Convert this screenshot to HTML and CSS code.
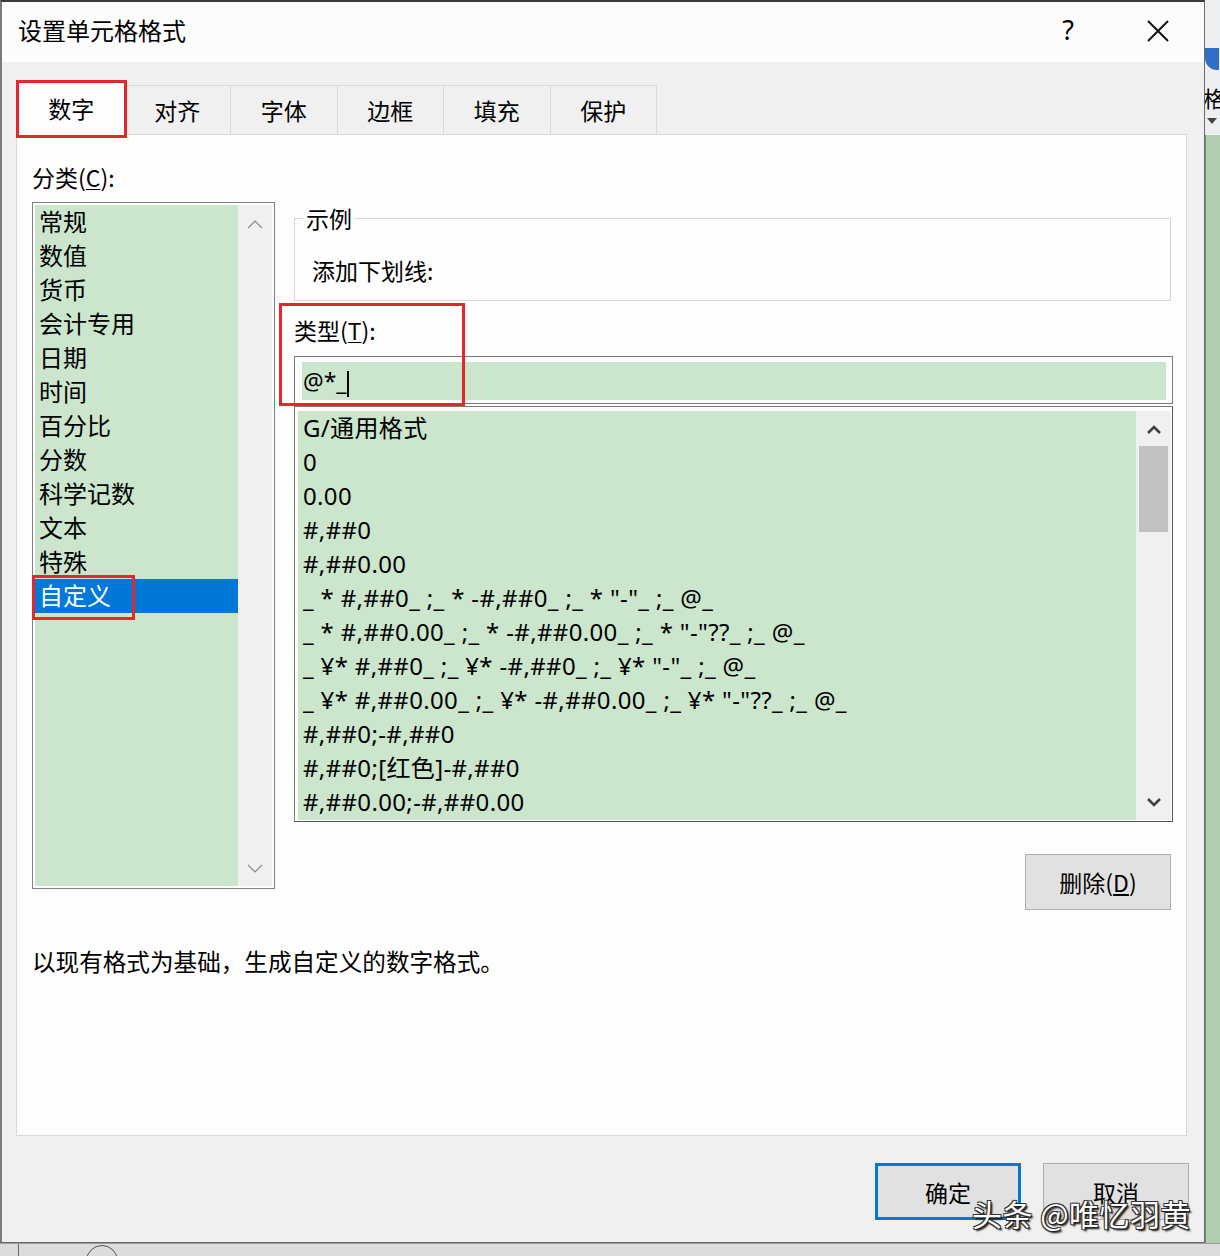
FILE: index.html
```html
<!DOCTYPE html>
<html lang="zh-CN">
<head>
    <meta charset="UTF-8">
    <meta name="viewport" content="width=device-width, initial-scale=1.0">
    <title>设置单元格格式</title>
    <link rel="stylesheet" href="styles.css">
</head>
<body>
<div class="desk">
    <div class="dialog">
        <div class="titlebar">
            <span class="title">设置单元格格式</span>
            <span class="help">?</span>
            <span class="close">
                <svg width="24" height="24" viewBox="0 0 24 24"><path d="M2 2 L22 22 M22 2 L2 22" stroke="#111" stroke-width="2" fill="none"/></svg>
            </span>
        </div>

        <div class="tabs">
            <div class="tab on">数字</div>
            <div class="tab">对齐</div>
            <div class="tab">字体</div>
            <div class="tab">边框</div>
            <div class="tab">填充</div>
            <div class="tab">保护</div>
        </div>

        <div class="panel">
            <div class="cols">
                <div class="leftcol">
                    <div class="label">分类(<u>C</u>):</div>
                    <div class="catbox">
                        <div class="catlist">
                            <div class="row">常规</div>
                            <div class="row">数值</div>
                            <div class="row">货币</div>
                            <div class="row">会计专用</div>
                            <div class="row">日期</div>
                            <div class="row">时间</div>
                            <div class="row">百分比</div>
                            <div class="row">分数</div>
                            <div class="row">科学记数</div>
                            <div class="row">文本</div>
                            <div class="row">特殊</div>
                            <div class="row sel">自定义<span class="mark mark-cat"></span></div>
                        </div>
                        <div class="sbar thin">
                            <svg width="16" height="10" viewBox="0 0 16 10"><polyline points="1,9 8,2 15,9" fill="none" stroke="#8a8a8a" stroke-width="1.2"/></svg>
                            <svg width="16" height="10" viewBox="0 0 16 10"><polyline points="1,1 8,8 15,1" fill="none" stroke="#8a8a8a" stroke-width="1.2"/></svg>
                        </div>
                    </div>
                </div>

                <div class="rightcol">
                    <div class="sample">
                        <span class="legend">示例</span>
                        <div class="sample-text">添加下划线:</div>
                    </div>
                    <div class="label type-label">类型(<u>T</u>):</div>
                    <div class="typebox">
                        <div class="typefill">@*_<span class="caret"></span></div>
                    </div>
                    <div class="fmtbox">
                        <div class="fmtlist">
                            <div class="row">G/通用格式</div>
                            <div class="row">0</div>
                            <div class="row">0.00</div>
                            <div class="row">#,##0</div>
                            <div class="row">#,##0.00</div>
                            <div class="row">_ * #,##0_ ;_ * -#,##0_ ;_ * "-"_ ;_ @_</div>
                            <div class="row">_ * #,##0.00_ ;_ * -#,##0.00_ ;_ * "-"??_ ;_ @_</div>
                            <div class="row">_ ¥* #,##0_ ;_ ¥* -#,##0_ ;_ ¥* "-"_ ;_ @_</div>
                            <div class="row">_ ¥* #,##0.00_ ;_ ¥* -#,##0.00_ ;_ ¥* "-"??_ ;_ @_</div>
                            <div class="row">#,##0;-#,##0</div>
                            <div class="row">#,##0;[红色]-#,##0</div>
                            <div class="row">#,##0.00;-#,##0.00</div>
                        </div>
                        <div class="sbar bold">
                            <svg width="16" height="10" viewBox="0 0 16 10"><polyline points="2,8 8,2 14,8" fill="none" stroke="#404040" stroke-width="2.6"/></svg>
                            <div class="thumb"></div>
                            <div class="spacer"></div>
                            <svg width="16" height="10" viewBox="0 0 16 10"><polyline points="2,2 8,8 14,2" fill="none" stroke="#404040" stroke-width="2.6"/></svg>
                        </div>
                    </div>
                    <div class="btnrow">
                        <button class="btn">删除(<u>D</u>)</button>
                    </div>
                    <span class="mark mark-type"></span>
                </div>
            </div>
            <p class="desc">以现有格式为基础，生成自定义的数字格式。</p>
        </div>

        <div class="footer">
            <button class="btn big default">确定</button>
            <button class="btn big">取消</button>
        </div>

        <div class="watermark">头条 @唯忆羽黄</div>
    </div>

    <div class="side">
        <div class="side-top">
            <div class="side-icon"></div>
            <span class="side-char">格</span>
            <span class="side-tri"></span>
        </div>
        <div class="side-green"></div>
    </div>

    <div class="bottom">
        <span class="bline"></span>
        <span class="bcircle"></span>
    </div>
</div>
</body>
</html>
```

FILE: styles.css
```css
* {
    box-sizing: border-box;
}
body {
    margin: 0;
    width: 1220px;
    height: 1256px;
    overflow: hidden;
    font-family: "Noto Sans", "Noto Sans CJK SC", sans-serif;
    color: #000;
    background: #d9d9d9;
}
.desk {
    display: grid;
    grid-template-columns: 1205px 15px;
    grid-template-rows: 1243px 13px;
}

/* dialog window */
.dialog {
    position: relative;
    display: flex;
    flex-direction: column;
    background: #f0f0f0;
    border-top: 2px solid #3a3a3a;
    border-left: 2px solid #7a7a7a;
    border-right: 1px solid #6a6a6a;
    border-bottom: 1px solid #6a6a6a;
}
.titlebar {
    height: 60px;
    background: #fcfcfc;
    display: flex;
    align-items: center;
    padding-left: 16px;
}
.title {
    font-size: 24px;
    line-height: 30px;
    font-family: "Noto Sans CJK SC", sans-serif;
    margin-top: -4px;
}
.help {
    margin-left: auto;
    width: 40px;
    text-align: center;
    font-size: 27px;
    line-height: 30px;
    margin-top: -4px;
}
.close {
    width: 46px;
    height: 30px;
    margin-left: 47px;
    margin-right: 23px;
    display: flex;
    justify-content: center;
    align-items: center;
    margin-top: -2px;
}

/* tabs */
.tabs {
    display: flex;
    align-items: flex-end;
    margin-top: 18px;
    margin-left: 16px;
    height: 54px;
}
.tab {
    width: 106.5px;
    height: 50px;
    line-height: 48px;
    text-align: center;
    font-size: 23px;
    font-family: "Noto Sans CJK SC", sans-serif;
    border: 1px solid #d9d9d9;
    border-left: none;
    background: #f0f0f0;
    margin-bottom: -1px;
}
.tab.on {
    height: 54px;
    line-height: 50px;
    background: #fdfdfd;
    border-left: 1px solid #d9d9d9;
    border-bottom: none;
    position: relative;
    z-index: 2;
    outline: 3px solid #e5262a;
    outline-offset: -1px;
    margin-bottom: -2px;
}

/* panel */
.panel {
    margin-left: 14px;
    width: 1171px;
    height: 1002px;
    background: #fdfdfd;
    border: 1px solid #d9d9d9;
    padding: 27px 0 0 15px;
}
.cols {
    display: flex;
    gap: 19px;
}
.label {
    font-size: 23px;
    line-height: 30px;
    font-family: "Noto Sans CJK SC", sans-serif;
}
.label u {
    text-decoration-thickness: 1px;
    text-underline-offset: 2px;
}
.leftcol {
    width: 243px;
}
.catbox {
    margin-top: 10px;
    height: 687px;
    border: 1px solid #828282;
    padding: 2px;
    display: flex;
    background: #fdfdfd;
}
.catlist {
    width: 203px;
    background: #cbe6cd;
}
.row {
    height: 34px;
    line-height: 34px;
    font-size: 24px;
    padding-left: 4px;
    white-space: pre;
    position: relative;
}
.row.sel {
    background: #0078d7;
    color: #fff;
}
.sbar {
    flex: 1;
    background: #f0f0f0;
    display: flex;
    flex-direction: column;
    align-items: center;
}
.sbar.thin {
    justify-content: space-between;
    padding: 14px 0 12px;
}
.sbar.bold {
    padding-top: 14px;
    padding-bottom: 13px;
}
.thumb {
    width: 29px;
    height: 86px;
    background: #c2c2c2;
    margin-top: 11px;
}
.spacer {
    flex: 1;
}

/* red annotation boxes */
.mark {
    position: absolute;
    border: 3px solid #e5262a;
    pointer-events: none;
}
.mark-cat {
    left: -3px;
    top: -4px;
    width: 103px;
    height: 45px;
}
.mark-type {
    left: -15px;
    top: 141px;
    width: 186px;
    height: 103px;
}

/* right column */
.rightcol {
    width: 879px;
    position: relative;
}
.sample {
    position: relative;
    margin-top: 56px;
    width: 877px;
    height: 83px;
    border: 1px solid #d6d6d6;
    padding: 36px 0 0 17px;
}
.legend {
    position: absolute;
    left: 8px;
    top: -16px;
    padding: 0 3px;
    background: #fdfdfd;
    font-size: 23px;
    line-height: 30px;
    font-family: "Noto Sans CJK SC", sans-serif;
}
.sample-text {
    font-size: 23px;
    line-height: 30px;
    font-family: "Noto Sans CJK SC", sans-serif;
}
.type-label {
    margin-top: 14px;
}
.typebox {
    margin-top: 11px;
    height: 48px;
    border: 1px solid #7a7a7a;
    padding: 5px 6px 3px 7px;
    background: #fdfdfd;
}
.typefill {
    height: 100%;
    background: #cbe6cd;
    font-size: 23px;
    line-height: 36px;
    padding-left: 1px;
    display: flex;
    align-items: center;
}
.caret {
    display: inline-block;
    width: 2px;
    height: 26px;
    background: #000;
    margin-top: 6px;
}
.fmtbox {
    margin-top: 2px;
    height: 416px;
    border: 1px solid #7a7a7a;
    border-right-color: #555;
    border-bottom-color: #555;
    padding: 4px 1px 1px 3px;
    display: flex;
    background: #fdfdfd;
}
.fmtlist {
    width: 838px;
    background: #cbe6cd;
    overflow: hidden;
}
.fmtlist .row {
    padding-left: 5px;
    letter-spacing: 0.35px;
}
.btnrow {
    display: flex;
    justify-content: flex-end;
    margin-top: 32px;
    padding-right: 2px;
}
.btn {
    width: 146px;
    height: 56px;
    background: #e1e1e1;
    border: 1px solid #adadad;
    font-family: "Noto Sans CJK SC", sans-serif;
    font-size: 23px;
    color: #000;
    padding: 0;
}
.desc {
    margin: 36px 0 0;
    font-size: 23.6px;
    line-height: 30px;
    font-family: "Noto Sans CJK SC", sans-serif;
}

/* footer buttons */
.footer {
    display: flex;
    justify-content: flex-end;
    gap: 22px;
    margin-top: 27px;
    padding-right: 15px;
}
.btn.big {
    height: 57px;
}
.btn.default {
    border: 3px solid #0078d7;
}

.watermark {
    position: absolute;
    left: 970px;
    top: 1193px;
    font-size: 30px;
    line-height: 36px;
    font-family: "Noto Sans CJK SC", sans-serif;
    color: #fff;
    letter-spacing: 0.5px;
    text-shadow: 1px 1px 0 #222, -1px -1px 0 #333, 1px -1px 0 #333, -1px 1px 0 #333, 2px 2px 2px #000;
}

/* excel behind the dialog */
.side {
    display: flex;
    flex-direction: column;
    overflow: hidden;
}
.side-top {
    height: 135px;
    background: #eceef0;
    position: relative;
    display: flex;
    flex-direction: column;
    align-items: flex-start;
}
.side-icon {
    margin-top: 48px;
    width: 14px;
    height: 22px;
    border-radius: 0 0 0 12px;
    background: #2f6fc7;
}
.side-char {
    font-family: "Noto Sans CJK SC", sans-serif;
    font-size: 22px;
    line-height: 26px;
    margin-top: 14px;
    margin-left: -2px;
}
.side-tri {
    margin-top: 8px;
    margin-left: 2px;
    border-left: 5px solid transparent;
    border-right: 5px solid transparent;
    border-top: 6px solid #444;
}
.side-green {
    flex: 1;
    background: #b3cdb3;
    border-left: 1px solid #7d8a7d;
}
.bottom {
    grid-column: 1 / 3;
    background: #dcdcdc;
    border-top: 1px solid #9a9a9a;
    position: relative;
    overflow: hidden;
}
.bline {
    position: absolute;
    left: 18px;
    top: 0;
    width: 1px;
    height: 13px;
    background: #666;
}
.bcircle {
    position: absolute;
    left: 86px;
    top: 1px;
    width: 32px;
    height: 32px;
    border: 1px solid #555;
    border-radius: 50%;
}
```
